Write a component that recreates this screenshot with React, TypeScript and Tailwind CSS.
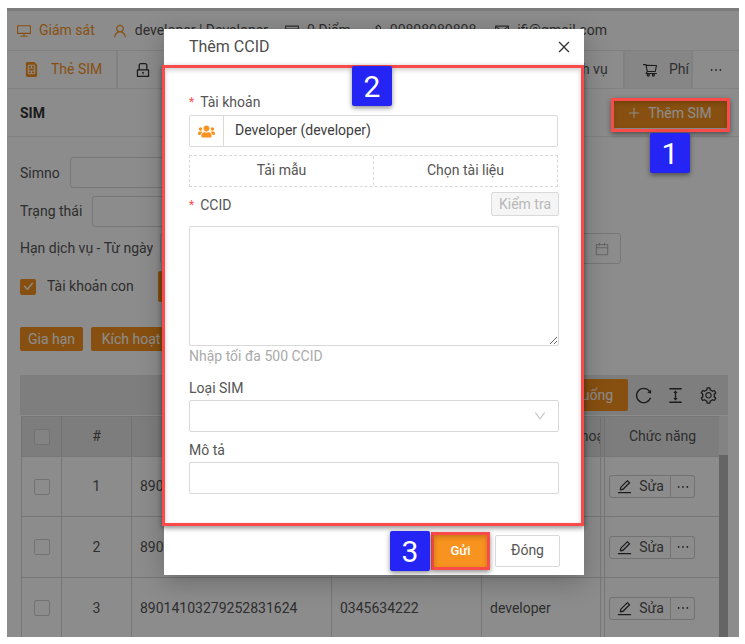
import React from 'react';
import {
  AiOutlineDesktop, AiOutlineUser, AiOutlineCreditCard, AiOutlinePhone, AiOutlineMail, AiOutlineLock,
  AiOutlineShoppingCart, AiOutlinePlus, AiOutlineCalendar, AiOutlineCheck, AiOutlineReload,
  AiOutlineColumnHeight, AiOutlineSetting, AiOutlineEdit, AiOutlineEllipsis, AiOutlineClose, AiOutlineDown,
} from 'react-icons/ai';
import { BsSimFill } from 'react-icons/bs';
import { FaUsers } from 'react-icons/fa';

const font = { fontFamily: 'Roboto, sans-serif' };

function HeaderItem({ icon, text, cls = 'text-[#555]', ml }: { icon: React.ReactNode; text: string; cls?: string; ml: string }) {
  return (
    <div className={`flex items-center gap-[7px] ${cls} ${ml}`}>
      {icon}
      <span className="whitespace-nowrap">{text}</span>
    </div>
  );
}

function Row({ n, h }: { n: number; h: string }) {
  return (
    <div className={`grid grid-cols-[41px_70px_200px_150px_119px_4px_116px] ${h} border-b border-[#d9d9d9] text-[#555]`}>
      <div className="flex items-center justify-center border-x border-[#d9d9d9]">
        <span className="w-4 h-4 rounded-[2px] border border-[#d0d0d0] bg-white" />
      </div>
      <div className="flex items-center justify-center border-r border-[#d9d9d9]">{n}</div>
      <div className="flex items-center pl-2 border-r border-[#d9d9d9]">89014103279252831624</div>
      <div className="flex items-center pl-2 border-r border-[#d9d9d9]">0345634222</div>
      <div className="flex items-center pl-2 border-r border-[#d9d9d9]">developer</div>
      <div className="border-r border-[#d9d9d9]" />
      <div className="flex items-center pl-[4px] border-r border-[#d9d9d9]">
        <div className="flex items-center h-[23px] w-[62px] justify-center gap-[6px] border border-[#d0d0d0] rounded-l-[3px]">
          <AiOutlineEdit size={17} className="text-[#333]" />
          <span>Sửa</span>
        </div>
        <div className="flex items-center justify-center h-[23px] w-[24px] border border-l-0 border-[#d0d0d0] rounded-r-[3px]">
          <AiOutlineEllipsis size={16} className="text-[#333]" />
        </div>
      </div>
    </div>
  );
}

export default function App() {
  return (
    <div style={font} className="relative w-[745px] h-[644px] overflow-hidden bg-white text-[14px] pt-2 pl-[7px]">
      {/* Page behind the dialog */}
      <div className="relative w-[732px] h-[629px] overflow-hidden bg-white">
        <div className="h-[3px] bg-[#e3e3e3]" />
        <div className="h-[40px] flex items-center border-b border-[#ececec] pl-[9px]">
          <HeaderItem icon={<AiOutlineDesktop size={16} />} text="Giám sát" cls="text-[#f7931e]" ml="" />
          <HeaderItem icon={<AiOutlineUser size={16} className="text-[#f7931e]" />} text="developer | Developer" ml="ml-[17px]" />
          <HeaderItem icon={<AiOutlineCreditCard size={16} />} text="0 Điểm" ml="ml-[16px]" />
          <HeaderItem icon={<AiOutlinePhone size={16} />} text="00808080808" ml="ml-[16px]" />
          <HeaderItem icon={<AiOutlineMail size={16} />} text="ifi@gmail.com" ml="ml-[18px]" />
        </div>
        <div className="h-[38px] flex items-stretch border-b border-[#ececec] text-[#555]">
          <div className="w-[111px] flex items-center pl-[17px] gap-[12px] text-[#f7931e] border-r-2 border-[#ececec]">
            <BsSimFill size={15} />
            <span>Thẻ SIM</span>
          </div>
          <div className="w-[507px] flex items-center pl-[16px] border-r-2 border-[#ececec]">
            <AiOutlineLock size={18} className="shrink-0 text-[#333]" />
            <span className="ml-[410px] whitespace-nowrap text-[14px]">Dịch vụ</span>
          </div>
          <div className="w-[68px] flex items-center pl-[17px] gap-[11px] overflow-hidden border-r-2 border-[#ececec] bg-[#f5f5f5]">
            <AiOutlineShoppingCart size={16} className="shrink-0 text-[#333]" />
            <span className="whitespace-nowrap">Phí thuê</span>
          </div>
          <div className="flex-1 flex items-center justify-center"><AiOutlineEllipsis size={16} className="text-[#333]" /></div>
        </div>
        <div className="h-[48px] flex items-center justify-between pl-[13px] pr-[11px] border-b border-[#ececec]">
          <span className="font-bold text-[14px] text-[#333] pt-[1px]">SIM</span>
          <div className="w-[115px] h-[30px] bg-[#f7931e] rounded-[2px] text-white flex items-center justify-center gap-[7px] pr-[2px]">
            <AiOutlinePlus size={14} />
            <span className="pt-[1px]">Thêm SIM</span>
          </div>
        </div>
        <div className="flex flex-col pl-[13px] text-[#555]">
          <div className="mt-[20px] flex items-center gap-[10px] h-[31px]">
            <span className="pt-[1px]">Simno</span>
            <div className="w-[200px] h-[31px] border border-[#d9d9d9] rounded-[3px]" />
          </div>
          <div className="mt-[8px] flex items-center gap-[10px] h-[31px]">
            <span>Trạng thái</span>
            <div className="w-[200px] h-[31px] border border-[#d9d9d9] rounded-[3px]" />
          </div>
          <div className="mt-[6px] flex items-center gap-[7px] h-[31px]">
            <span className="whitespace-nowrap">Hạn dịch vụ - Từ ngày</span>
            <div className="w-[461px] h-[31px] border border-[#d9d9d9] rounded-[3px] flex items-center justify-end pr-[10px]">
              <AiOutlineCalendar size={16} className="text-[#bbb]" />
            </div>
          </div>
          <div className="mt-[7px] flex items-center h-[31px]">
            <span className="w-4 h-4 rounded-[2px] bg-[#f7931e] flex items-center justify-center text-white"><AiOutlineCheck size={11} stroke="currentColor" strokeWidth={70} /></span>
            <span className="ml-[11px]">Tài khoản con</span>
            <div className="ml-[24px] w-[80px] h-[31px] bg-[#f7931e] rounded-[2px]" />
          </div>
          <div className="mt-[25px] flex gap-2 text-white">
            <div className="w-[63px] h-[24px] bg-[#f7931e] rounded-[2px] flex items-center justify-center">Gia hạn</div>
            <div className="w-[80px] h-[24px] bg-[#f7931e] rounded-[2px] flex items-center justify-center">Kích hoạt</div>
          </div>
          <div className="mt-[24px] w-[708px] h-[40px] bg-[#e5e5e5] flex items-center justify-end">
            <div className="w-[90px] h-[32px] bg-[#f7931e] rounded-[2px] flex items-center justify-center text-white">Tải xuống</div>
            <AiOutlineReload size={19} className="text-[#333] ml-[6px]" />
            <AiOutlineColumnHeight size={19} className="text-[#333] ml-[13px]" />
            <AiOutlineSetting size={19} className="text-[#333] ml-[14px] mr-[10px]" />
          </div>
          <div className="mt-[1px] ml-[1px] w-[700px] relative">
            <div className="grid grid-cols-[41px_70px_200px_150px_119px_4px_116px] h-[41px] bg-[#e3e3e3] border-y border-[#d9d9d9] text-[#555]">
              <div className="flex items-center justify-center border-x border-[#d0d0d0]"><span className="w-4 h-4 rounded-[2px] border border-[#d0d0d0] bg-[#eee]" /></div>
              <div className="flex items-center justify-center border-r border-[#d0d0d0]">#</div>
              <div className="flex items-center justify-center border-r border-[#d0d0d0]">CCID</div>
              <div className="flex items-center justify-center border-r border-[#d0d0d0]">Số SIM</div>
              <div className="flex items-center pl-[44px] overflow-hidden whitespace-nowrap border-r border-[#d0d0d0]">Số điện thoại</div>
              <div className="border-r border-[#d0d0d0]" />
              <div className="flex items-center justify-center border-r border-[#d0d0d0]">Chức năng</div>
            </div>
            <Row n={1} h="h-[60px]" />
            <Row n={2} h="h-[61px]" />
            <Row n={3} h="h-[61px]" />
            <div className="absolute left-[698px] top-0 w-[9px] h-full flex flex-col">
              <div className="h-[39px] bg-[#eee]" />
              <div className="flex-1 bg-[#b9b9b9]" />
            </div>
          </div>
        </div>
        {/* Mask */}
        <div className="absolute inset-0 bg-black/45" />
      </div>

      {/* Dialog */}
      <div className="absolute left-[164px] top-[29px] w-[420px] h-[546px] bg-white flex flex-col shadow-[0_6px_24px_rgba(0,0,0,0.25)]">
        <div className="h-[36px] shrink-0 flex items-center justify-between pl-[25px] pr-[12px] text-[#4d4d4d]">
          <span className="text-[16px]">Thêm CCID</span>
          <AiOutlineClose size={16} className="text-[#333]" />
        </div>
        <div className="pl-[25px] flex flex-col text-[#555]">
          <div className="mt-[27px] h-[20px] flex items-center gap-[6px]">
            <span className="text-[#ff4d4f] text-[12px] leading-none">*</span><span>Tài khoản</span>
          </div>
          <div className="mt-[3px] w-[369px] h-[32px] border border-[#d9d9d9] rounded-[2px] flex items-center">
            <div className="w-[34px] h-full flex items-center justify-center border-r border-[#d9d9d9] text-[#f7931e]"><FaUsers size={17} /></div>
            <span className="pl-[11px] pb-[1px] text-[#3d3d3d]">Developer (developer)</span>
          </div>
          <div className="mt-[8px] w-[369px] h-[32px] border border-dashed border-[#d9d9d9] flex items-center pb-[1px]">
            <div className="w-[184px] h-full flex items-center justify-center border-r border-dashed border-[#d9d9d9]">Tải mẫu</div>
            <div className="flex-1 flex items-center justify-center">Chọn tài liệu</div>
          </div>
          <div className="mt-[5px] w-[370px] h-[24px] flex items-center justify-between">
            <div className="flex items-center gap-[6px] pt-[2px]">
              <span className="text-[#ff4d4f] text-[12px] leading-none">*</span><span>CCID</span>
            </div>
            <div className="w-[68px] h-[24px] border border-[#d9d9d9] bg-[#f5f5f5] rounded-[2px] text-[#b8b8b8] flex items-center justify-center">Kiểm tra</div>
          </div>
          <textarea className="mt-[10px] block w-[370px] h-[120px] border border-[#d9d9d9] rounded-[2px] resize-y outline-none" />
          <div className="h-[20px] flex items-center text-[#aaaaaa]">Nhập tối đa 500 CCID</div>
          <div className="mt-[12px] h-[20px] flex items-center">Loại SIM</div>
          <div className="mt-[2px] w-[370px] h-[32px] border border-[#d9d9d9] rounded-[2px] flex items-center justify-end pr-[11px]">
            <AiOutlineDown size={14} className="text-[#c4c4c4]" />
          </div>
          <div className="mt-[8px] h-[20px] flex items-center">Mô tả</div>
          <div className="mt-[2px] w-[370px] h-[32px] border border-[#d9d9d9] rounded-[2px]" />
        </div>
        <div className="mt-auto pr-[24px] pb-[8px] flex justify-end gap-[8px]">
          <div className="w-[53px] h-[32px] bg-[#f7931e] text-white font-medium text-[13px] flex items-center justify-center">Gửi</div>
          <div className="w-[65px] h-[32px] border border-[#d9d9d9] rounded-[2px] text-[#555] flex items-center justify-center pb-[1px]">Đóng</div>
        </div>
      </div>

      {/* Annotations */}
      <div className="absolute left-[162px] top-[65px] w-[422px] h-[461px] border-[3px] border-[#fb4a4a] shadow-[0_2px_5px_rgba(0,0,0,0.45),inset_0_2px_5px_rgba(0,0,0,0.2)]" />
      <div className="absolute left-[611px] top-[98px] w-[119px] h-[34px] border-[3px] border-[#fb4a4a] shadow-[0_2px_5px_rgba(0,0,0,0.45),inset_0_2px_5px_rgba(0,0,0,0.2)]" />
      <div className="absolute left-[431px] top-[532px] w-[59px] h-[38px] border-[3px] border-[#fb4a4a] shadow-[0_2px_5px_rgba(0,0,0,0.45),inset_0_2px_5px_rgba(0,0,0,0.2)]" />
      <div className="absolute left-[352px] top-[66px] w-[40px] h-[40px] rounded-[2px] bg-[#2424f5] text-white text-[30px] flex items-center justify-center shadow-[0_2px_5px_rgba(0,0,0,0.45)]">2</div>
      <div className="absolute left-[650px] top-[133px] w-[40px] h-[40px] rounded-[2px] bg-[#2424f5] text-white text-[30px] flex items-center justify-center shadow-[0_2px_5px_rgba(0,0,0,0.45)]">1</div>
      <div className="absolute left-[390px] top-[531px] w-[40px] h-[40px] rounded-[2px] bg-[#2424f5] text-white text-[30px] flex items-center justify-center shadow-[0_2px_5px_rgba(0,0,0,0.45)]">3</div>
    </div>
  );
}
